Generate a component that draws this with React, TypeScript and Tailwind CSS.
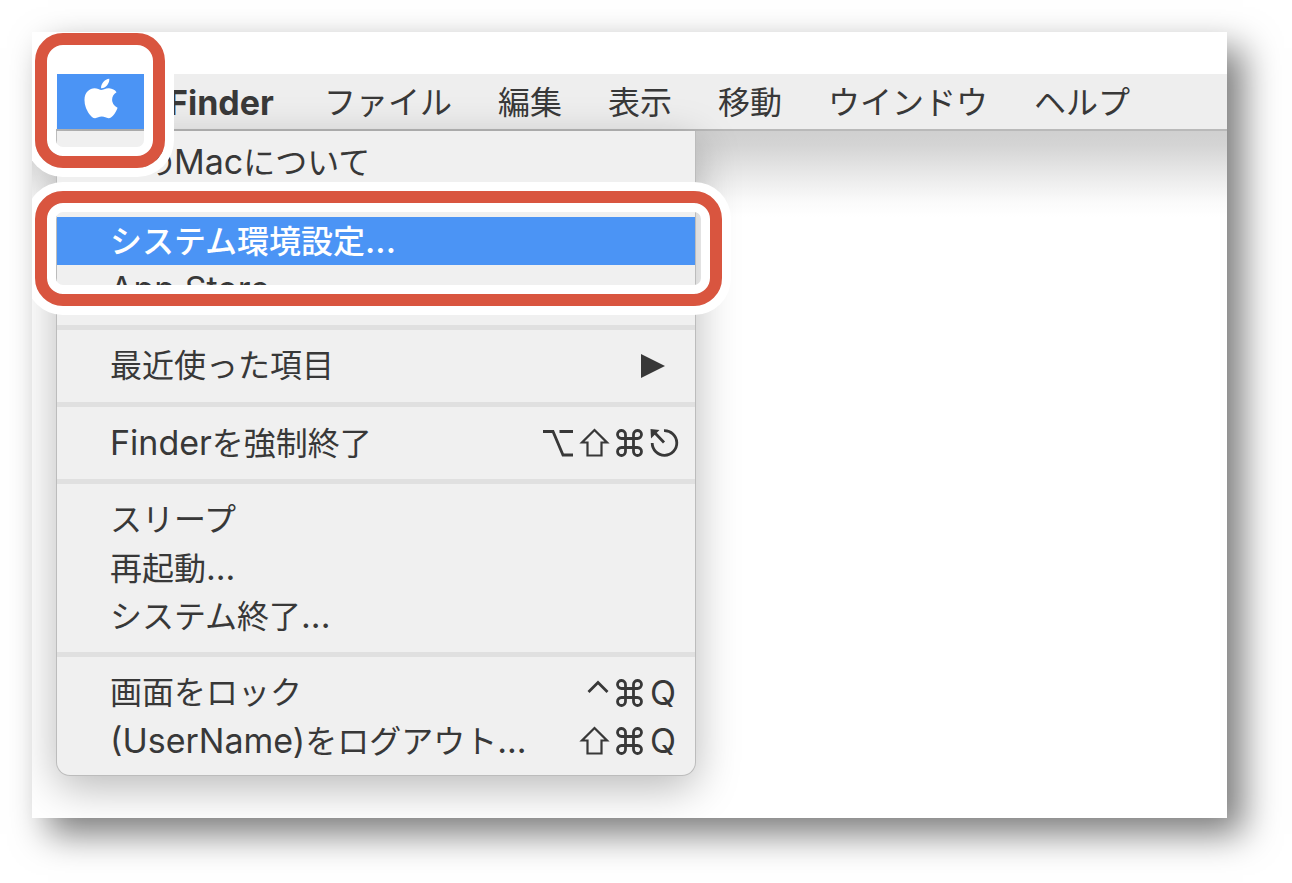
import { useState } from 'react';
import type { ReactNode } from 'react';
import { FaApple } from 'react-icons/fa';

type MenuEntry = {
  id: string;
  label: string;
  keys?: string[];
  submenu?: boolean;
};

// Each inner list is one block of the menu, a separator is drawn between blocks
const appleMenu: MenuEntry[][] = [
  [{ id: 'about', label: 'このMacについて' }],
  [
    { id: 'preferences', label: 'システム環境設定...' },
    { id: 'appstore', label: 'App Store' },
  ],
  [{ id: 'recent', label: '最近使った項目', submenu: true }],
  [{ id: 'forcequit', label: 'Finderを強制終了', keys: ['option', 'shift', 'command', 'escape'] }],
  [
    { id: 'sleep', label: 'スリープ' },
    { id: 'restart', label: '再起動...' },
    { id: 'shutdown', label: 'システム終了...' },
  ],
  [
    { id: 'lock', label: '画面をロック', keys: ['control', 'command', 'Q'] },
    { id: 'logout', label: '(UserName)をログアウト...', keys: ['shift', 'command', 'Q'] },
  ],
];

const barTitles = ['ファイル', '編集', '表示', '移動', 'ウインドウ', 'ヘルプ'];

const keyShapes: Record<string, ReactNode> = {
  option: <path d="M-2 3.5H8L18 27H28M14.5 3.5H28" />,
  shift: <path d="M14.5 2L27 14.5H21.5V27.5H7.5V14.5H2Z" strokeWidth="2.2" />,
  command: (
    <path d="M10.5 10.5H18.5V19.5H10.5ZM10.5 10.5V6.8A4 4 0 1 0 6.5 10.5H10.5ZM18.5 10.5V6.8A4 4 0 1 1 22.5 10.5H18.5ZM10.5 19.5V23.2A4 4 0 1 1 6.5 19.5H10.5ZM18.5 19.5V23.2A4 4 0 1 0 22.5 19.5H18.5Z" />
  ),
  escape: (
    <>
      <path d="M14 2.7A12.3 12.3 0 1 1 2.2 15M14 14.5L5 5" />
      <path d="M0.5 1L9.5 2L1 10.5Z" fill="currentColor" stroke="none" />
    </>
  ),
  control: <path d="M8.5 14L18 4.5L27.5 14" />,
};

const KeyGlyph = ({ name }: { name: string }) => {
  if (!keyShapes[name]) {
    return <span className="w-[35px] text-left text-[34px]">{name}</span>;
  }
  return (
    <span className="flex w-[35px] items-center">
      <svg
        viewBox="0 0 30 30"
        className="size-[30px] overflow-visible"
        fill="none"
        stroke="currentColor"
        strokeWidth="2.8"
        aria-label={name}
      >
        {keyShapes[name]}
      </svg>
    </span>
  );
};

// Latin runs are set slightly larger than the Japanese around them
const Label = ({ text }: { text: string }) => (
  <span>
    {text.split(/([ -~]+)/).map((part, i) =>
      i % 2 ? (
        <span key={i} className="text-[34px]">
          {part}
        </span>
      ) : (
        part
      )
    )}
  </span>
);

// Red frame with a white edge on both sides
const ring =
  'pointer-events-none absolute z-10 rounded-[28px] border-12 border-[#d9553f] shadow-[0_0_0_9px_#fff,inset_0_0_0_9px_#fff]';

const App = () => {
  const [active, setActive] = useState('preferences');

  return (
    <div className="pt-8 pr-[65px] pb-16 pl-8">
      <div className="shadow-[16px_16px_34px_rgba(0,0,0,0.52)]">
        <div
          className="overflow-hidden bg-white pt-[42px] text-[32px] leading-[48px] text-[#383838]"
          style={{ fontFamily: 'Inter, "Noto Sans CJK JP", sans-serif' }}
        >
          {/* Menu bar */}
          <header className="ml-[25px] flex h-[55px] items-center bg-[#eeeeee] whitespace-nowrap">
            <div className="relative h-full w-[87px] shrink-0">
              <button
                aria-label="Apple"
                className="flex h-full w-full items-start justify-center bg-[#4b94f5] pt-0.5 text-white"
              >
                <FaApple className="h-[45px] w-[34px]" />
              </button>
              <div className={`${ring} -top-[41px] -right-[21px] -bottom-[39px] -left-[22px]`} />
            </div>
            <nav className="flex gap-[46px] pt-0.5 pl-6">
              <button className="min-w-[110px] text-left text-[34px] font-bold">Finder</button>
              {barTitles.map((title) => (
                <button key={title}>{title}</button>
              ))}
            </nav>
          </header>

          {/* Desktop under the bar */}
          <main className="border-t-2 border-[#b9b9b9] bg-[linear-gradient(#d0d0d0_0px,#d4d4d4_14px,#ececec_48px,#fafafa_70px,#fff_86px)] bg-no-repeat pb-[42px] pl-6">
            <div className="w-[640px] rounded-b-[14px] border border-t-0 border-[#bcbcbc] bg-[#f0f0f0] pt-[7px] pb-2.5 shadow-[0_12px_44px_rgba(0,0,0,0.28)]">
              {appleMenu.map((block, i) => (
                <div key={block[0].id} className="first:pb-0.5">
                  {i > 0 && <hr className="my-3 h-[5px] border-0 bg-[#e0e0e0]" />}
                  {block.map((item) => (
                    <div key={item.id} className="relative">
                      <button
                        onMouseEnter={() => setActive(item.id)}
                        className={`flex h-12 w-full items-center justify-between pr-2.5 pl-[53px] ${
                          active === item.id ? 'bg-[#4b94f5] font-medium text-white' : ''
                        }`}
                      >
                        <Label text={item.label} />
                        {item.submenu && (
                          <svg viewBox="0 0 24 24" className="mr-5 size-6" fill="currentColor">
                            <path d="M0 0L24 12L0 24Z" />
                          </svg>
                        )}
                        {item.keys && (
                          <span className="flex">
                            {item.keys.map((key) => (
                              <KeyGlyph key={key} name={key} />
                            ))}
                          </span>
                        )}
                      </button>
                      {item.id === 'preferences' && (
                        <div className={`${ring} -top-[26px] -right-[27px] -bottom-[41px] -left-[22px]`} />
                      )}
                    </div>
                  ))}
                </div>
              ))}
            </div>
          </main>
        </div>
      </div>
    </div>
  );
};

export default App;
